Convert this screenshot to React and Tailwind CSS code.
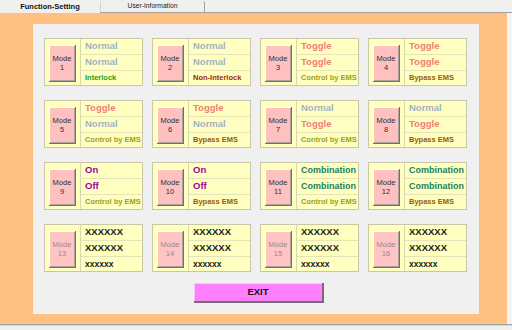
import React from "react";

const C = {
  normal: "text-[#a2b3c3]",
  toggle: "text-[#f08078]",
  on: "text-[#a000a0]",
  comb: "text-[#208060]",
  x: "text-[#1a1a1a]",
};

const modes = [
  { n: 1, a: ["Normal", C.normal], b: ["Normal", C.normal], c: ["Interlock", "text-[#20a020]"] },
  { n: 2, a: ["Normal", C.normal], b: ["Normal", C.normal], c: ["Non-Interlock", "text-[#a02808]"] },
  { n: 3, a: ["Toggle", C.toggle], b: ["Toggle", C.toggle], c: ["Control by EMS", "text-[#a0a020]"] },
  { n: 4, a: ["Toggle", C.toggle], b: ["Toggle", C.toggle], c: ["Bypass EMS", "text-[#a05a00]"] },
  { n: 5, a: ["Toggle", C.toggle], b: ["Normal", C.normal], c: ["Control by EMS", "text-[#a0a020]"] },
  { n: 6, a: ["Toggle", C.toggle], b: ["Normal", C.normal], c: ["Bypass EMS", "text-[#a05a00]"] },
  { n: 7, a: ["Normal", C.normal], b: ["Toggle", C.toggle], c: ["Control by EMS", "text-[#a0a020]"] },
  { n: 8, a: ["Normal", C.normal], b: ["Toggle", C.toggle], c: ["Bypass EMS", "text-[#a05a00]"] },
  { n: 9, a: ["On", C.on], b: ["Off", C.on], c: ["Control by EMS", "text-[#a0a020]"] },
  { n: 10, a: ["On", C.on], b: ["Off", C.on], c: ["Bypass EMS", "text-[#a05a00]"] },
  { n: 11, a: ["Combination", C.comb], b: ["Combination", C.comb], c: ["Control by EMS", "text-[#a0a020]"] },
  { n: 12, a: ["Combination", C.comb], b: ["Combination", C.comb], c: ["Bypass EMS", "text-[#a05a00]"] },
  { n: 13, a: ["XXXXXX", C.x], b: ["XXXXXX", C.x], c: ["xxxxxx", C.x], dim: true },
  { n: 14, a: ["XXXXXX", C.x], b: ["XXXXXX", C.x], c: ["xxxxxx", C.x], dim: true },
  { n: 15, a: ["XXXXXX", C.x], b: ["XXXXXX", C.x], c: ["xxxxxx", C.x], dim: true },
  { n: 16, a: ["XXXXXX", C.x], b: ["XXXXXX", C.x], c: ["xxxxxx", C.x], dim: true },
];

function Card({ m }) {
  const big = m.a[0] === "Combination" ? "text-[9px]" : "text-[9.5px]";
  return (
    <div className="flex h-[48px] w-[99px] border border-[#c8c8a8] bg-[#ffffc0]">
      <div className="w-[36px] border-r border-[#d8d8b0] pl-[4px] pt-[6px]">
        <div
          className={`flex h-[37px] w-[27px] flex-col items-center justify-center border-b border-r border-[#707070] shadow-[inset_1px_1px_0_#ffffff,inset_-1px_-1px_0_#b0a0a0] text-[7.5px] leading-[9px] ${
            m.dim ? "bg-[#ffc4c4] text-[#a08888]" : "bg-[#ffc0c0] text-[#303030]"
          }`}
        >
          <span>Mode</span>
          <span>{m.n}</span>
        </div>
      </div>
      <div className="flex flex-1 flex-col font-bold">
        <div className={`flex h-[16px] items-center border-b border-[#e4e4b8] pl-[4px] ${big} ${m.a[1]}`}>{m.a[0]}</div>
        <div className={`flex h-[16px] items-center border-b border-[#e4e4b8] pl-[4px] ${big} ${m.b[1]}`}>{m.b[0]}</div>
        <div className={`flex flex-1 items-center pl-[4px] ${m.dim ? "text-[8.5px]" : "text-[7.5px]"} ${m.c[1]}`}>{m.c[0]}</div>
      </div>
    </div>
  );
}

export default function App() {
  return (
    <div className="h-[330px] w-[512px] overflow-hidden bg-[#f0f0f0] font-['Liberation_Sans',Arial,sans-serif]">
      {/* tabs */}
      <div className="flex h-[13px] items-stretch">
        <div className="flex w-[100px] items-center justify-center text-[7.5px] font-bold text-[#101010]">
          Function-Setting
        </div>
        <div className="mt-[1px] flex w-[105px] items-center justify-center rounded-t-[2px] border-x border-b border-[#a0a0a0] border-l-[#d0d0d0] text-[6.7px] text-[#202020]">
          User-Information
        </div>
        <div className="flex-1 border-b border-[#a0a0a0]"></div>
      </div>
      {/* orange frame */}
      <div className="flex">
        <div className="h-[311px] w-[507px] bg-[#ffc080] pb-[10px] pl-[33px] pr-[28px] pt-[11px]">
          <div className="flex h-[290px] flex-col bg-[#f0f0f0] pl-[11px] pt-[14px]">
            <div className="grid grid-cols-[repeat(4,99px)] gap-x-[9px] gap-y-[14px]">
              {modes.map((m) => (
                <Card key={m.n} m={m} />
              ))}
            </div>
            <div className="mt-[11px] pl-[150px]">
              <div className="flex h-[20px] w-[130px] items-center justify-center border-b-2 border-r-2 border-[#707070] bg-[#ff80ff] text-[9.5px] font-bold text-[#101010] shadow-[inset_1px_1px_0_#ffc0ff]">
                EXIT
              </div>
            </div>
          </div>
        </div>
        <div className="flex-1 bg-[#f4f4f4]"></div>
      </div>
      <div className="h-[2px] border-t border-[#a0a0a0] bg-[#d8d8d8]"></div>
    </div>
  );
}
